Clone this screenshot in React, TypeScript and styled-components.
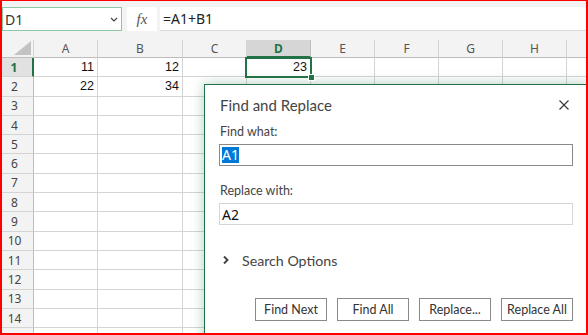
import React from 'react';
import styled, { createGlobalStyle } from 'styled-components';

const GlobalStyle = createGlobalStyle`
  html, body { margin: 0; padding: 0; background: #fff; }
  body { font-family: "Noto Sans", "Liberation Sans", sans-serif; }
`;

const COLS = [
  { id: 'A', w: 64 },
  { id: 'B', w: 85 },
  { id: 'C', w: 64 },
  { id: 'D', w: 64 },
  { id: 'E', w: 64 },
  { id: 'F', w: 64 },
  { id: 'G', w: 64 },
  { id: 'H', w: 64 },
  { id: '', w: 64 },
];
const DATA: Record<string, string> = { A1: '11', B1: '12', D1: '23', A2: '22', B2: '34' };
// row 15 only peeks out under the frame, so it gets no number
const ROW_LABELS = [1, 2, 3, 4, 5, 6, 7, 8, 9, 10, 11, 12, 13, 14, 0];
const ACTIVE = { col: 'D', row: 1 };
const GREEN = '#217346';
const DIALOG_FONT = '"Lato", "Noto Sans", sans-serif';

function App() {
  return (
    <Frame>
      <GlobalStyle />
      <FormulaBar>
        <NameBox>
          <span>D1</span>
          <svg width="8" height="5" viewBox="0 0 8 5">
            <path d="M1 1 L4 4 L7 1" fill="none" stroke="#444" strokeWidth="1.2" />
          </svg>
        </NameBox>
        <FxBox>fx</FxBox>
        <FormulaInput>=A1+B1</FormulaInput>
      </FormulaBar>

      <Sheet>
        <HeaderRow>
          <Corner>
            <svg width="17" height="14" viewBox="0 0 17 14">
              <path d="M17 0 L17 14 L0 14 Z" fill="#c3c3c3" />
            </svg>
          </Corner>
          {COLS.map((c, i) => (
            <ColHeader key={i} $w={c.w} $active={c.id === ACTIVE.col}>
              {c.id}
            </ColHeader>
          ))}
        </HeaderRow>
        {ROW_LABELS.map((r, ri) => (
          <Row key={ri}>
            <RowHeader $active={r === ACTIVE.row}>{r > 0 ? r : ''}</RowHeader>
            {COLS.map((c, ci) => {
              const sel = c.id === ACTIVE.col && r === ACTIVE.row;
              return (
                <Cell key={ci} $w={c.w} $selected={sel}>
                  {r > 0 ? DATA[c.id + r] : null}
                  {sel && <Handle />}
                </Cell>
              );
            })}
          </Row>
        ))}
      </Sheet>

      <Dialog>
        <TitleRow>
          <Title>Find and Replace</Title>
          <svg width="10" height="10" viewBox="0 0 10 10" style={{ marginRight: 4 }}>
            <path d="M0.5 0.5 L9.5 9.5 M9.5 0.5 L0.5 9.5" stroke="#333" strokeWidth="1.1" />
          </svg>
        </TitleRow>
        <Label $gap={9}>Find what:</Label>
        <TextBox $focused>
          <Highlight>A1</Highlight>
        </TextBox>
        <Label $gap={17}>Replace with:</Label>
        <TextBox>A2</TextBox>
        <OptionsRow>
          <svg width="8" height="10" viewBox="0 0 8 10">
            <path d="M2 1.5 L5.5 5 L2 8.5" fill="none" stroke="#444" strokeWidth="1.9" />
          </svg>
          <span>Search Options</span>
        </OptionsRow>
        <ButtonRow>
          <Button>Find Next</Button>
          <Button>Find All</Button>
          <Button>Replace...</Button>
          <Button>Replace All</Button>
        </ButtonRow>
      </Dialog>
    </Frame>
  );
}

export default App;

const Frame = styled.div`
  position: relative;
  width: 588px;
  height: 335px;
  box-sizing: border-box;
  border: 2px solid #ff0000;
  border-top-width: 1px;
  overflow: hidden;
  background: #fff;
`;

const FormulaBar = styled.div`
  height: 39px;
  box-sizing: border-box;
  padding-top: 6px;
  background: #f3f3f3;
  display: flex;
  align-items: flex-start;
`;

const NameBox = styled.div`
  width: 120px;
  height: 24px;
  box-sizing: border-box;
  border: 1px solid #8cc8a3;
  background: #fff;
  display: flex;
  align-items: center;
  justify-content: space-between;
  padding: 0 3px 0 2px;
  font-size: 14px;
  color: #333;
`;

const FxBox = styled.div`
  margin-left: 5px;
  width: 30px;
  height: 24px;
  background: #fff;
  display: flex;
  align-items: center;
  justify-content: center;
  font-family: "Liberation Serif", serif;
  font-style: italic;
  font-size: 15px;
  color: #555;
`;

const FormulaInput = styled.div`
  margin-left: 3px;
  flex: 1;
  height: 24px;
  box-sizing: border-box;
  background: #fff;
  border-bottom: 1px solid #dadada;
  display: flex;
  align-items: center;
  padding-left: 3px;
  font-size: 14px;
  color: #222;
`;

const Sheet = styled.div`
  display: flex;
  flex-direction: column;
`;

const HeaderRow = styled.div`
  display: flex;
  height: 18px;
  background: #f3f3f3;
`;

const Corner = styled.div`
  width: 32px;
  flex: none;
  box-sizing: border-box;
  border-right: 1px solid #d4d4d4;
  border-bottom: 1px solid #bdbdbd;
  display: flex;
  align-items: flex-end;
  justify-content: flex-end;
  padding: 0 2px 2px 0;
`;

const ColHeader = styled.div<{ $w: number; $active?: boolean }>`
  width: ${(p) => p.$w}px;
  flex: none;
  box-sizing: border-box;
  border-right: 1px solid ${(p) => (p.$active ? '#bdbdbd' : '#d4d4d4')};
  border-bottom: ${(p) => (p.$active ? `2px solid ${GREEN}` : '1px solid #bdbdbd')};
  background: ${(p) => (p.$active ? '#d6d6d6' : 'transparent')};
  color: ${(p) => (p.$active ? GREEN : '#555')};
  font-weight: ${(p) => (p.$active ? 700 : 400)};
  font-size: 12px;
  line-height: 17px;
  text-align: center;
`;

const Row = styled.div`
  display: flex;
  height: 19.3px;
  flex: none;
`;

const RowHeader = styled.div<{ $active?: boolean }>`
  width: 32px;
  flex: none;
  box-sizing: border-box;
  padding-right: 6px;
  border-right: ${(p) => (p.$active ? `2px solid ${GREEN}` : '1px solid #bdbdbd')};
  border-bottom: 1px solid #d4d4d4;
  background: ${(p) => (p.$active ? '#e1e1e1' : '#f3f3f3')};
  color: ${(p) => (p.$active ? GREEN : '#444')};
  font-weight: ${(p) => (p.$active ? 700 : 400)};
  font-size: 12px;
  display: flex;
  align-items: center;
  justify-content: center;
`;

const Cell = styled.div<{ $w: number; $selected?: boolean }>`
  position: relative;
  z-index: ${(p) => (p.$selected ? 1 : 0)};
  width: ${(p) => p.$w}px;
  flex: none;
  box-sizing: border-box;
  border-right: 1px solid #d4d4d4;
  border-bottom: 1px solid #d4d4d4;
  padding-right: 3px;
  display: flex;
  align-items: center;
  justify-content: flex-end;
  font-family: "Liberation Sans", Arial, sans-serif;
  font-size: 12.5px;
  color: #111;
  &::after {
    content: '';
    display: ${(p) => (p.$selected ? 'block' : 'none')};
    position: absolute;
    left: -2px;
    right: -2px;
    top: -1px;
    bottom: -2px;
    border: 2px solid ${GREEN};
    pointer-events: none;
  }
`;

const Handle = styled.span`
  position: absolute;
  right: -5px;
  bottom: -5px;
  width: 5px;
  height: 5px;
  background: ${GREEN};
  border: 1px solid #fff;
  z-index: 2;
`;

const Dialog = styled.div`
  position: absolute;
  left: 202px;
  top: 83px;
  width: 386px;
  height: 270px;
  box-sizing: border-box;
  background: #fff;
  border-top: 1px solid ${GREEN};
  border-left: 1px solid ${GREEN};
  box-shadow: 0 0 12px rgba(33, 115, 70, 0.35);
  padding: 10px 14px 0 14px;
  display: flex;
  flex-direction: column;
  color: #444;
  font-family: ${DIALOG_FONT};
`;

const TitleRow = styled.div`
  height: 20px;
  width: 354px;
  display: flex;
  align-items: center;
  justify-content: space-between;
`;

const Title = styled.div`
  font-size: 15px;
  color: #444;
  padding-left: 1px;
`;

const Label = styled.div<{ $gap: number }>`
  margin-top: ${(p) => p.$gap}px;
  height: 16px;
  line-height: 16px;
  padding-left: 1px;
  font-size: 12.5px;
  color: #444;
`;

const TextBox = styled.div<{ $focused?: boolean }>`
  margin-top: 4px;
  width: 354px;
  height: 22px;
  box-sizing: border-box;
  border: 1px solid ${(p) => (p.$focused ? '#8a8a8a' : '#d6d6d6')};
  padding-left: 2px;
  display: flex;
  align-items: center;
  font-family: "Noto Sans", sans-serif;
  font-size: 14px;
  color: #111;
`;

const Highlight = styled.span`
  background: #0078d7;
  color: #fff;
  line-height: 16px;
`;

const OptionsRow = styled.div`
  margin-top: 25px;
  height: 20px;
  display: flex;
  align-items: center;
  gap: 12px;
  padding-left: 3px;
  font-size: 14.2px;
  color: #444;
`;

const ButtonRow = styled.div`
  margin-top: 28px;
  width: 354px;
  display: flex;
  justify-content: flex-end;
  gap: 10px;
`;

const Button = styled.button`
  width: 72px;
  height: 23px;
  box-sizing: border-box;
  border: 1px solid #8a8a8a;
  background: #fff;
  padding: 0;
  font-family: ${DIALOG_FONT};
  font-size: 12.5px;
  color: #333;
`;
